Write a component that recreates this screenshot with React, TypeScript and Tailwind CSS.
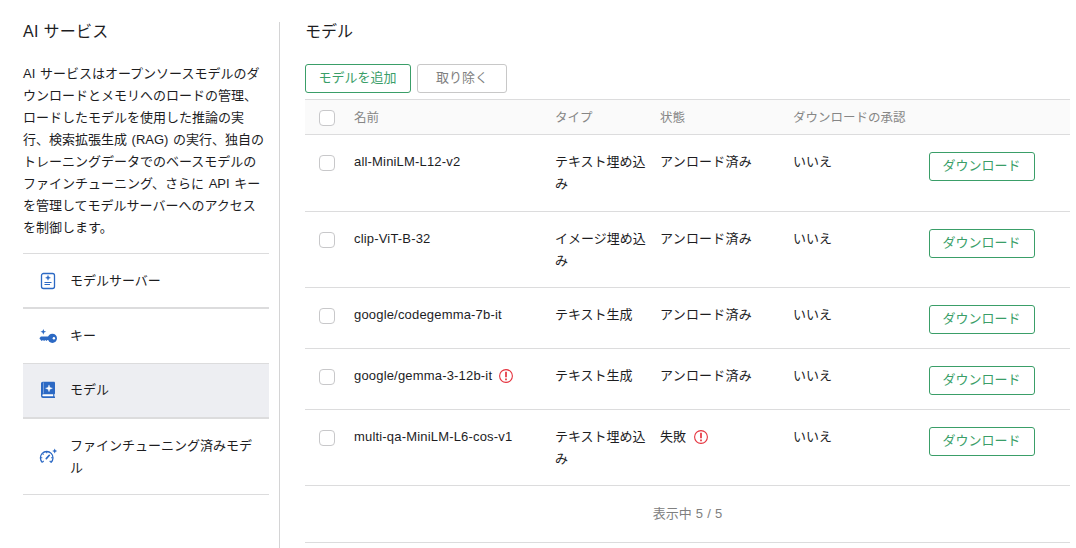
import type { ReactNode } from "react"

type Model = {
  name: string
  type: string
  status: string
  nameAlert?: boolean
  statusAlert?: boolean
  height: string
}

const models: Model[] = [
  { name: "all-MiniLM-L12-v2", type: "テキスト埋め込み", status: "アンロード済み", height: "h-[77px]" },
  { name: "clip-ViT-B-32", type: "イメージ埋め込み", status: "アンロード済み", height: "h-[76px]" },
  { name: "google/codegemma-7b-it", type: "テキスト生成", status: "アンロード済み", height: "h-[61px]" },
  { name: "google/gemma-3-12b-it", type: "テキスト生成", status: "アンロード済み", nameAlert: true, height: "h-[61px]" },
  { name: "multi-qa-MiniLM-L6-cos-v1", type: "テキスト埋め込み", status: "失敗", statusAlert: true, height: "h-[76px]" },
]

const columns = "grid grid-cols-[49px_201px_105px_133px_136px_1fr]"

function ServerIcon() {
  return (
    <svg width="20" height="20" viewBox="0 0 20 20" fill="none" stroke="#2c69c4">
      <rect x="3.5" y="2.5" width="13" height="15" rx="2" strokeWidth="1.3" />
      <path d="M10 4.3l.8 1.700 1.700.8-1.700.8-.8 1.700-.8-1.700-1.700-.8 1.700-.8z" fill="#2c69c4" strokeWidth=".3" />
      <path d="M6.500 11.500h7M6.500 13.500h5.500" strokeWidth="1.200" />
    </svg>
  )
}

function KeyIcon() {
  return (
    <svg width="20" height="20" viewBox="0 0 20 20" fill="#2c69c4">
      <path d="M5.300 2.900l.8 2.100 2.100.8-2.100.8-.8 2.100-.8-2.100-2.100-.8 2.100-.8z" />
      <circle cx="14.400" cy="12.300" r="4.600" />
      <path d="M2.900 10.600h8v3.400h-1.400l-1 1.100-1.100-1.100-1.400 1.100-1-1.100-1.300 1.100-1-1.100-1.300-1.700z" />
      <circle cx="15.900" cy="12.300" r="1.200" fill="#fff" />
    </svg>
  )
}

function ModelIcon() {
  return (
    <svg width="20" height="20" viewBox="0 0 20 20" fill="#2c69c4">
      <path d="M4.800 1.800h11c.7 0 1.200.5 1.200 1.200v10.300c0 .5-.3.9-.7 1v2.300h.7V18H5a2 2 0 0 1-2-2V3.600c0-1 .8-1.800 1.800-1.800z" />
      <path d="M5.300 14.200h9.900v2H5.300a1 1 0 0 1 0-2z" fill="#fff" />
      <path d="M5.500 2.500v11" stroke="#88abe0" strokeWidth=".8" />
      <path d="M11 4.900l.9 2.500 2.500.9-2.500.9-.9 2.500-.9-2.500-2.500-.9 2.500-.9z" fill="#fff" stroke="#fff" strokeWidth=".4" />
    </svg>
  )
}

function TuneIcon() {
  return (
    <svg width="20" height="20" viewBox="0 0 20 20" fill="none" stroke="#2c69c4">
      <path d="M4.400 15.400a6.300 6.300 0 1 1 8.600 0" strokeWidth="1.300" />
      <path d="M4.400 15.400l1.300-1.500M13 15.400l-1.300-1.500M2.600 10.700h1.700M13.100 10.700h1.700M8.700 4.700v1.600M4.600 6.700l1 1" strokeWidth="1.100" />
      <path d="M8.300 11.600l3-3.300" strokeWidth="1.700" strokeLinecap="round" />
      <path d="M16.700 1.500l.8 1.700 1.700.8-1.700.8-.8 1.700-.8-1.700-1.700-.8 1.700-.8z" fill="#2c69c4" stroke="none" />
    </svg>
  )
}

function AlertIcon() {
  return (
    <svg className="shrink-0" width="14" height="14" viewBox="0 0 14 14" fill="none" stroke="#e5343f">
      <circle cx="7" cy="7" r="6.400" strokeWidth="1.100" />
      <path d="M7 2.800v5.400M7 9.500v1.700" strokeWidth="1.700" />
    </svg>
  )
}

function Checkbox() {
  return (
    <input
      type="checkbox"
      className="block h-4 w-4 appearance-none rounded-[4px] border border-[#c8c8ca] bg-white"
    />
  )
}

function NavItem({ icon, label, className }: { icon: ReactNode; label: string; className: string }) {
  return (
    <li className={`flex items-center border-[#dcdcdd] pr-3 pl-[15px] ${className}`}>
      <span className="w-8 shrink-0">{icon}</span>
      <span>{label}</span>
    </li>
  )
}

function GreenButton({ children }: { children: ReactNode }) {
  return (
    <button className="flex h-[29px] w-[106px] items-center justify-center rounded-[3px] border border-[#3a9e68] pr-px pb-px text-[#3a9e68]">
      {children}
    </button>
  )
}

export default function App() {
  return (
    <div
      lang="ja"
      className="flex h-[548px] w-[1076px] overflow-hidden bg-white pt-[22px] pl-[23px] font-['Liberation_Sans','Noto_Sans_CJK_JP',sans-serif] text-[13px] leading-[22px] text-[#1d1d1f]"
    >
      <aside className="w-[257px] shrink-0 border-r border-[#d4d4d5] pr-[10px]">
        <h1 className="h-[41px] text-base leading-5 tracking-[0.3px]">AI サービス</h1>
        <p className="h-[190px] pr-[2px] [word-spacing:1px]">
          AI サービスはオープンソースモデルのダウンロードとメモリへのロードの管理、ロードしたモデルを使用した推論の実行、検索拡張生成 (RAG) の実行、独自のトレーニングデータでのベースモデルのファインチューニング、さらに API キーを管理してモデルサーバーへのアクセスを制御します。
        </p>
        <ul>
          <NavItem icon={<ServerIcon />} label="モデルサーバー" className="h-[55px] border-y pt-px" />
          <NavItem icon={<KeyIcon />} label="キー" className="h-[55px] border-t" />
          <NavItem icon={<ModelIcon />} label="モデル" className="h-[55px] border-y bg-[#edeef2] pb-px" />
          <NavItem icon={<TuneIcon />} label="ファインチューニング済みモデル" className="h-[77px] border-y pt-px" />
        </ul>
      </aside>

      <main className="ml-[25px] w-[765px]">
        <h2 className="h-[42px] text-base leading-5">モデル</h2>
        <div className="flex h-[35px] gap-[6px]">
          <GreenButton>モデルを追加</GreenButton>
          <button className="flex h-[29px] w-[90px] items-center justify-center rounded-[3px] border border-[#c8c8c8] pb-px text-[#808080]">
            取り除く
          </button>
        </div>

        {/* table head */}
        <div className={`${columns} h-9 items-center border-y border-[#dcdcdd] bg-[#fafafa] pt-0.5 text-[12.500px] text-[#868686]`}>
          <div className="pl-[14px]"><Checkbox /></div>
          <div>名前</div>
          <div>タイプ</div>
          <div>状態</div>
          <div>ダウンロードの承認</div>
        </div>

        {models.map((model) => (
          <div key={model.name} className={`${columns} ${model.height} border-b border-[#dcdcdd] pt-4`}>
            <div className="pt-1 pl-[14px]"><Checkbox /></div>
            <div className="flex h-[22px] items-center gap-[7px] tracking-[0.18px]">
              {model.name}
              {model.nameAlert && <AlertIcon />}
            </div>
            <div className="pr-3">{model.type}</div>
            <div className="flex h-[22px] items-center gap-2">
              <span className={model.statusAlert ? "" : "tracking-[0.2px]"}>{model.status}</span>
              {model.statusAlert && <AlertIcon />}
            </div>
            <div>いいえ</div>
            <div className="pt-px"><GreenButton>ダウンロード</GreenButton></div>
          </div>
        ))}

        <div className="flex h-[57px] items-center justify-center border-b border-[#dcdcdd] text-[#808080] [word-spacing:0.6px]">
          表示中 5 / 5
        </div>
      </main>
    </div>
  )
}
